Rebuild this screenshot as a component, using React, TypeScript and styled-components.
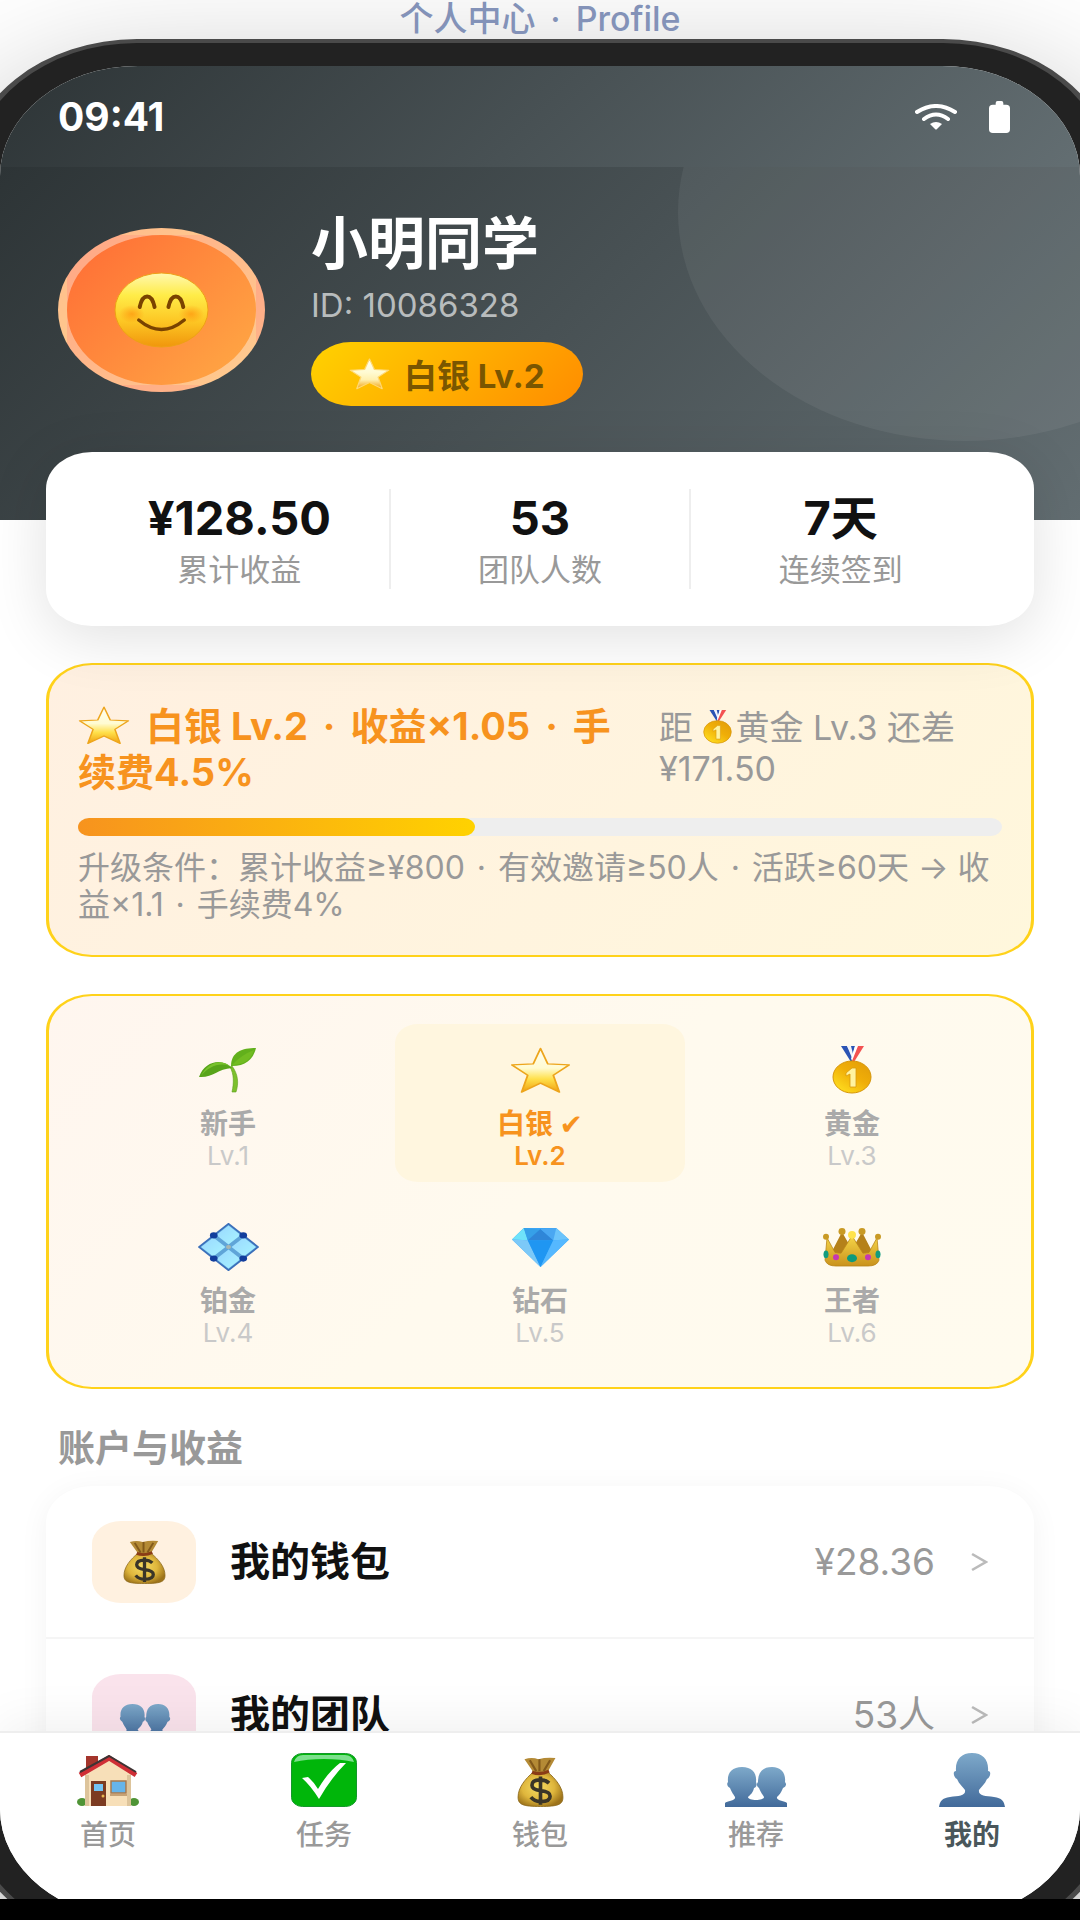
import React from "react";
import styled, { createGlobalStyle } from "styled-components";

const GlobalStyle = createGlobalStyle`
  *, *::before, *::after { box-sizing: border-box; }
  body {
    margin: 0;
    background: #fff;
    font-family: Inter, "Noto Sans CJK SC", "DejaVu Sans", sans-serif;
    color: #111;
  }
  a { color: inherit; text-decoration: none; }
  ul { margin: 0; padding: 0; list-style: none; }
  h1, h2, p { margin: 0; }
  svg { display: block; flex: none; }
`;

const Page = styled.div`
  display: flex;
  flex-direction: column;
  height: 100vh;
  background: #000;
`;

const Stage = styled.main`
  flex: 1;
  min-height: 0;
  display: flex;
  flex-direction: column;
  overflow: hidden;
  background: #fff;
`;

const BottomStrip = styled.footer`
  height: 21px;
  background: #000;
`;

const Caption = styled.p`
  position: relative;
  z-index: 1;
  height: 39px;
  line-height: 38px;
  text-align: center;
  font-size: 34px;
  font-weight: 500;
  color: #8392b8;
`;

const Phone = styled.div`
  flex: 1;
  min-height: 0;
  display: flex;
  margin: 0 -35px -47px;
  padding: 23px 29px;
  border: 4px solid #4a4a4a;
  border-width: 4px 6px;
  border-radius: 172px / 137px;
  background: #222;
  box-shadow: 0 46px 140px rgba(0, 0, 0, 0.3);
`;

const Screen = styled.div`
  flex: 1;
  min-width: 0;
  display: flex;
  flex-direction: column;
  overflow: hidden;
  border-radius: 138px / 110px;
  background: #fff;
`;

const StatusBar = styled.header`
  display: flex;
  align-items: center;
  justify-content: space-between;
  flex: none;
  height: 101px;
  padding: 0 70px 0 58px;
  background: linear-gradient(135deg, #2d3436, #636e72);
  color: #fff;
  font-size: 39px;
  font-weight: 700;
`;

const StatusIcons = styled.div`
  display: flex;
  align-items: center;
  gap: 32px;
`;

const Scroll = styled.div`
  flex: 1;
  min-height: 0;
  overflow: hidden;
`;

const Hero = styled.section`
  position: relative;
  overflow: hidden;
  display: flex;
  align-items: center;
  gap: 46px;
  padding: 46px 58px 114px;
  background: linear-gradient(135deg, #2d3436, #636e72);
  &::after {
    content: "";
    position: absolute;
    top: -184px;
    right: -172px;
    width: 574px;
    height: 458px;
    border-radius: 50%;
    background: rgba(255, 255, 255, 0.06);
  }
`;

const Avatar = styled.div`
  display: flex;
  align-items: center;
  justify-content: center;
  width: 207px;
  height: 164px;
  border: 7px solid rgba(255, 255, 255, 0.4);
  border-width: 7px 9px;
  border-radius: 50%;
  background: linear-gradient(135deg, #ff6b35, #ffab45);
`;

const Identity = styled.div`
  display: flex;
  flex-direction: column;
  align-items: flex-start;
`;

const Name = styled.h1`
  font-size: 57px;
  line-height: 62px;
  font-weight: 700;
  color: #fff;
`;

const UserId = styled.p`
  margin: 10px 0 17px;
  font-size: 33px;
  line-height: 40px;
  color: #b8bcbd;
`;

const Badge = styled.span`
  display: flex;
  align-items: center;
  gap: 14px;
  height: 64px;
  padding: 0 38px;
  border-radius: 40px / 32px;
  background: linear-gradient(135deg, #ffd200, #ff8c00);
  font-size: 33px;
  font-weight: 700;
  color: #7a5600;
`;

const Card = styled.section`
  margin: 0 46px 37px;
  border-radius: 46px / 37px;
`;

const Stats = styled(Card)`
  position: relative;
  z-index: 1;
  display: flex;
  margin-top: -68px;
  padding: 37px 44px;
  background: #fff;
  box-shadow: 0 12px 60px rgba(0, 0, 0, 0.12);
`;

const Stat = styled.div`
  flex: 1;
  height: 100px;
  text-align: center;
  & + & { border-left: 2px solid #eee; }
`;

const StatValue = styled.p`
  font-size: 47px;
  line-height: 57px;
  font-weight: 700;
`;

const StatLabel = styled.p`
  font-size: 31px;
  line-height: 48px;
  color: #999;
`;

const LevelCard = styled(Card)`
  padding: 38px 29px 32px;
  border: 2px solid #ffd21a;
  border-width: 2px 3px;
  background: linear-gradient(135deg, #fff0e1, #fff7dc);
`;

const LevelHead = styled.div`
  display: grid;
  grid-template-columns: 581fr 343fr;
`;

const LevelTitle = styled.h2`
  padding-right: 20px;
  font-size: 38px;
  line-height: 46px;
  font-weight: 700;
  color: #f7931e;
`;

const LevelNext = styled.p`
  font-size: 34px;
  line-height: 41px;
  padding-top: 4px;
  color: #999;
`;

const Inline = styled.span<{ $after?: number }>`
  display: inline-block;
  vertical-align: middle;
  margin: -8px ${(p) => p.$after ?? 0}px 0 0;
`;

const Track = styled.div`
  height: 18px;
  margin: 23px 0 13px;
  border-radius: 11px / 9px;
  background: #eee;
`;

const Fill = styled.div<{ $value: number }>`
  width: ${(p) => p.$value}%;
  height: 100%;
  border-radius: 11px / 9px;
  background: linear-gradient(90deg, #f7931e, #ffd200);
`;

const Terms = styled.p`
  font-size: 32px;
  line-height: 37px;
  color: #999;
`;

const Tiers = styled(Card).attrs({ as: "ul" })`
  display: grid;
  grid-template-columns: repeat(3, 1fr);
  gap: 19px 22px;
  padding: 28px 34px;
  margin-bottom: 34px;
  border: 2px solid #ffd21a;
  border-width: 2px 3px;
  background: linear-gradient(135deg, #fff6ef, #fffaee 50%, #fffbee);
`;

const Tier = styled.li<{ $active?: boolean }>`
  display: flex;
  flex-direction: column;
  align-items: center;
  height: 158px;
  padding-top: 20px;
  border-radius: 23px / 19px;
  background: ${(p) => (p.$active ? "#fff6df" : "transparent")};
  color: ${(p) => (p.$active ? "#f7931e" : "#aaa")};
`;

const TierIcon = styled.div`
  display: flex;
  align-items: center;
  height: 52px;
`;

const TierName = styled.p`
  margin-top: 11px;
  font-size: 28px;
  line-height: 34px;
  font-weight: 700;
`;

const TierLevel = styled.p<{ $active?: boolean }>`
  font-size: 26px;
  line-height: 30px;
  font-weight: ${(p) => (p.$active ? 600 : 400)};
  color: ${(p) => (p.$active ? "#f7931e" : "#c9c9c9")};
`;

const SectionTitle = styled.h2`
  padding: 0 58px;
  font-size: 37px;
  line-height: 52px;
  font-weight: 600;
  color: #999;
`;

const Menu = styled(Card).attrs({ as: "ul" })`
  margin-top: 11px;
  background: #fff;
  box-shadow: 0 5px 30px rgba(0, 0, 0, 0.05);
`;

const MenuItem = styled.li`
  & + & { border-top: 2px solid #f5f5f5; }
`;

const MenuLink = styled.a`
  display: flex;
  align-items: center;
  padding: 35px 46px 34px;
`;

const MenuIcon = styled.span<{ $tint: string }>`
  display: flex;
  align-items: center;
  justify-content: center;
  width: 104px;
  height: 82px;
  margin-right: 34px;
  border-radius: 29px / 23px;
  background: ${(p) => p.$tint};
`;

const MenuLabel = styled.span`
  flex: 1;
  font-size: 40px;
  line-height: 48px;
  font-weight: 600;
`;

const MenuValue = styled.span`
  margin-right: 36px;
  font-size: 37px;
  line-height: 48px;
  color: #999;
`;

const TabBar = styled.nav`
  position: relative;
  z-index: 2;
  flex: none;
  display: flex;
  height: 188px;
  padding-top: 18px;
  border-top: 2px solid #eee;
  background: #fff;
  box-shadow: 0 -9px 46px rgba(0, 0, 0, 0.06);
`;

const Tab = styled.a<{ $active?: boolean }>`
  flex: 1;
  display: flex;
  flex-direction: column;
  align-items: center;
  gap: 8px;
  font-size: 28px;
  line-height: 40px;
  font-weight: ${(p) => (p.$active ? 700 : 500)};
  color: ${(p) => (p.$active ? "#4a575b" : "#999")};
`;

const TabIcon = styled.span`
  display: flex;
  align-items: flex-end;
  height: 56px;
`;

type Art = { w: number; h: number };

const Canvas = ({ w, h, box, children }: Art & { box: string; children: React.ReactNode }) => (
  <svg width={w} height={h} viewBox={box} preserveAspectRatio="none" aria-hidden="true">
    {children}
  </svg>
);

const Smile = ({ w, h }: Art) => (
  <Canvas w={w} h={h} box="0 0 96 76">
    <defs>
      <linearGradient id="face" x1="0" y1="0" x2="0" y2="1">
        <stop offset="0" stopColor="#fff8b0" />
        <stop offset="0.3" stopColor="#ffec48" />
        <stop offset="0.65" stopColor="#fdc724" />
        <stop offset="1" stopColor="#f0960c" />
      </linearGradient>
      <radialGradient id="blush">
        <stop offset="0" stopColor="#ff7a00" stopOpacity="0.5" />
        <stop offset="1" stopColor="#ff7a00" stopOpacity="0" />
      </radialGradient>
    </defs>
    <ellipse cx="48" cy="38" rx="47" ry="37" fill="url(#face)" stroke="#eda015" strokeWidth="1" />
    <ellipse cx="18" cy="42" rx="13" ry="9" fill="url(#blush)" />
    <ellipse cx="78" cy="42" rx="13" ry="9" fill="url(#blush)" />
    <path d="M26 35c3-14 12-14 15 0M55 35c3-14 12-14 15 0" fill="none" stroke="#7a4300" strokeWidth="4" strokeLinecap="round" />
    <path d="M25 48q23 19 46 0" fill="none" stroke="#7a4300" strokeWidth="3.5" strokeLinecap="round" />
  </Canvas>
);

const Star = ({ w, h, pale }: Art & { pale?: boolean }) => {
  const id = pale ? "starPale" : "star";
  return (
    <Canvas w={w} h={h} box="0 0 100 100">
      <defs>
        <linearGradient id={id} x1="0" y1="0" x2="0" y2="1">
          <stop offset="0" stopColor="#fffef0" />
          <stop offset="0.45" stopColor="#fffbd2" />
          <stop offset="0.7" stopColor={pale ? "#fff0b0" : "#ffe04a"} />
          <stop offset="1" stopColor="#f0a010" />
        </linearGradient>
      </defs>
      <path
        d="M50 3 62 36 97 38 71 60 81 96 50 77 19 96 29 60 3 38 38 36Z"
        fill={`url(#${id})`}
        stroke={pale ? "#ffd873" : "#eda51c"}
        strokeWidth="3"
        strokeLinejoin="round"
      />
    </Canvas>
  );
};

const Medal = ({ w, h }: Art) => (
  <Canvas w={w} h={h} box="0 0 40 48">
    <defs>
      <linearGradient id="medal" x1="1" y1="0" x2="0.2" y2="1">
        <stop offset="0" stopColor="#e09b0a" />
        <stop offset="0.5" stopColor="#f0ae08" />
        <stop offset="1" stopColor="#ffdf20" />
      </linearGradient>
    </defs>
    <path d="M9 0H15L22 12 19 16Z" fill="#2b54b4" />
    <path d="M15 0H19L22 8 20 12Z" fill="#f2f4fa" />
    <path d="M19 0H23L21 8Z" fill="#2b54b4" />
    <path d="M23 0H26L21 15 19 13Z" fill="#fff" />
    <path d="M26 0H32L22 16 20 15Z" fill="#f35252" />
    <ellipse cx="20" cy="31" rx="19" ry="16" fill="url(#medal)" stroke="#d6960a" />
    <path d="M14 27 20 22H24V41H18V28L14 30Z" fill="#fff3a0" stroke="#d89a10" strokeWidth="0.8" />
  </Canvas>
);

const Seedling = ({ w, h }: Art) => (
  <Canvas w={w} h={h} box="0 0 58 45">
    <path d="M31 19c4 7 4 16 2 25h4c3-9 2-18-4-26z" fill="#7cc02c" stroke="#5d9e1c" strokeWidth="0.6" />
    <path d="M32 18C32 4 43 0 57 0 54 12 46 18 33 18Z" fill="#62b01c" />
    <path d="M33 17Q42 7 55 2 52 12 44 15 38 17 33 17Z" fill="#72bc22" />
    <path d="M33 20C24 10 6 12 0 29c14 1 18-8 33-9Z" fill="#58a41a" />
    <path d="M31 18C20 14 9 19 2 28 8 16 20 10 31 18Z" fill="#78c22c" />
  </Canvas>
);

const DotDiamond = ({ w, h }: Art) => (
  <Canvas w={w} h={h} box="0 0 60 60">
    <defs>
      <linearGradient id="tile" x1="0" y1="0" x2="1" y2="1">
        <stop offset="0" stopColor="#9ad8ff" />
        <stop offset="1" stopColor="#a8f4ff" />
      </linearGradient>
    </defs>
    <path d="M30 1 59 30 30 59 1 30Z" fill="#5fa5d8" stroke="#3b6fba" strokeWidth="2" strokeLinejoin="round" />
    <g fill="url(#tile)">
      <path d="M30 3 42 15 30 27 18 15Z" />
      <path d="M45 18 57 30 45 42 33 30Z" />
      <path d="M30 33 42 45 30 57 18 45Z" />
      <path d="M15 18 27 30 15 42 3 30Z" />
    </g>
    <g fill="#123d9c">
      <circle cx="15.5" cy="15.5" r="3.8" />
      <circle cx="44.5" cy="15.5" r="3.8" />
      <circle cx="15.5" cy="44.5" r="3.8" />
      <circle cx="44.5" cy="44.5" r="3.8" />
    </g>
    <circle cx="30" cy="30" r="2.5" fill="#a9b7b0" />
  </Canvas>
);

const Gem = ({ w, h }: Art) => (
  <Canvas w={w} h={h} box="0 0 58 42">
    <path d="M12 1H45L58 13 29 42 0 13Z" fill="#3aa5f5" />
    <path d="M12 1 0 13 16 14Z" fill="#6fe3fa" />
    <path d="M12 1 29 3 16 14Z" fill="#36a0e8" />
    <path d="M29 2 16 14H42Z" fill="#2f86d8" />
    <path d="M29 2 45 1 42 14Z" fill="#4aa7f2" />
    <path d="M45 1 58 13 42 14Z" fill="#6cc4fb" />
    <path d="M0 13 16 14 29 42Z" fill="#7cc9f8" />
    <path d="M16 14H42L29 42Z" fill="#1f96f2" />
    <path d="M42 14 58 13 29 42Z" fill="#55b8ff" />
  </Canvas>
);

const Crown = ({ w, h }: Art) => (
  <Canvas w={w} h={h} box="0 0 58 40">
    <defs>
      <linearGradient id="crown" x1="0" y1="0" x2="0" y2="1">
        <stop offset="0" stopColor="#f6d648" />
        <stop offset="1" stopColor="#c9921c" />
      </linearGradient>
    </defs>
    <path d="M8 26 19 4 29 22 39 4 50 26Z" fill="#b5811a" />
    <path d="M4 10 12 25 18 26 29 8 40 26 46 25 54 10 56 33Q54 39 45 39H13Q4 39 2 33Z" fill="url(#crown)" stroke="#b98518" strokeWidth="0.8" />
    <g fill="#c99a24">
      <circle cx="3" cy="9" r="3" />
      <circle cx="55" cy="9" r="3" />
      <circle cx="19" cy="3.5" r="3.5" />
      <circle cx="39" cy="3.5" r="3.5" />
    </g>
    <circle cx="29" cy="7" r="4" fill="#ffe34d" />
    <ellipse cx="29" cy="31" rx="5" ry="4" fill="#0d9a7c" />
    <ellipse cx="3" cy="27" rx="2.5" ry="4" fill="#129c7f" />
    <ellipse cx="55" cy="27" rx="2.5" ry="4" fill="#129c7f" />
    <circle cx="13" cy="30" r="3" fill="#c637b4" />
    <circle cx="45" cy="30" r="3" fill="#c637b4" />
  </Canvas>
);

const MoneyBag = ({ w, h }: Art) => (
  <Canvas w={w} h={h} box="0 0 44 46">
    <defs>
      <radialGradient id="bag" cx="0.45" cy="0.45" r="0.6">
        <stop offset="0" stopColor="#f6dc62" />
        <stop offset="0.6" stopColor="#dfb63c" />
        <stop offset="1" stopColor="#9d731a" />
      </radialGradient>
    </defs>
    <path d="M7 2Q14 0 20 2 28 0 36 1L28 15H16Z" fill="#b48a35" />
    <path d="M12 3 18 13M21 2 21 13M31 3 25 13" stroke="#82591a" strokeWidth="2" />
    <path d="M15 14H29C36 20 43 28 43 37 43 44 38 45.5 22 45.5S1 44 1 37C1 28 8 20 15 14Z" fill="url(#bag)" stroke="#8d6a1c" strokeWidth="0.8" />
    <path d="M14 14Q22 17 30 13" stroke="#8a3c16" strokeWidth="3" fill="none" />
    <path d="M30 24Q27 21 22 21 14 21 14 26 14 30 22 31 31 32 31 36 31 41 22 41 16 41 13 37M22 18V44" fill="none" stroke="#3a3528" strokeWidth="3.4" />
  </Canvas>
);

const House = ({ w, h }: Art) => (
  <Canvas w={w} h={h} box="0 0 62 52">
    <ellipse cx="5" cy="47" rx="5" ry="4" fill="#4f9436" />
    <ellipse cx="57" cy="47" rx="5" ry="4" fill="#4f9436" />
    <path d="M9 1H21V16H9Z" fill="#a4352c" />
    <path d="M8 18 32 4 54 18V51H8Z" fill="#f7dfb8" />
    <path d="M8 20H12V51H8ZM50 20H54V51H50Z" fill="#ddc49b" />
    <path d="M3 20 32 3 59 20" fill="none" stroke="#cf2f36" strokeWidth="5" />
    <path d="M3 17 32 1 59 17" fill="none" stroke="#3d3434" strokeWidth="2" />
    <path d="M14 26H29V51H14Z" fill="#7c3b22" />
    <path d="M17 29H26V36H17Z" fill="#74c4f4" />
    <circle cx="26" cy="41" r="1.5" fill="#e9b750" />
    <path d="M34 26H49V38H34Z" fill="#66b4ea" stroke="#a8794e" strokeWidth="1.5" />
    <path d="M33 39H50V41H33Z" fill="#c7a275" />
  </Canvas>
);

const CheckBox = ({ w, h }: Art) => (
  <Canvas w={w} h={h} box="0 0 66 54">
    <rect x="0.5" y="0.5" width="65" height="53" rx="11" ry="9" fill="#00b60a" stroke="#14982a" />
    <path d="M12 2H54Q61 2 63 9 50 6 33 6T3 9Q5 2 12 2Z" fill="#7ce08c" />
    <path d="M11 25 17 24Q22 28 27 36 37 19 49 10H55Q40 25 28 46Q20 33 11 25Z" fill="#fff" />
  </Canvas>
);

const BustGradient = ({ id }: { id: string }) => (
  <defs>
    <linearGradient id={id} x1="0" y1="0" x2="0" y2="1">
      <stop offset="0" stopColor="#7ea9ca" />
      <stop offset="1" stopColor="#426a9a" />
    </linearGradient>
  </defs>
);

const Bust = ({ w, h }: Art) => (
  <Canvas w={w} h={h} box="0 0 66 54">
    <BustGradient id="bust" />
    <path
      d="M33 0C22 0 16 7 17 18 13 18 15 25 18 26 20 31 24 34 26 37 27 43 20 43 11 44 3 45 1 48 0 54H66C65 48 63 45 55 44 46 43 39 43 40 37 42 34 46 31 48 26 51 25 53 18 49 18 50 7 44 0 33 0Z"
      fill="url(#bust)"
    />
  </Canvas>
);

const Busts = ({ w, h, id }: Art & { id: string }) => (
  <Canvas w={w} h={h} box="0 -14 62 54">
    <BustGradient id={id} />
    <path
      d="M17 0C7 0 2 6 3 15 1 17 3 20 5 21 7 26 9 28 10 30 11 34 2 34 0 36V40H62V36C60 34 51 34 52 30 54 28 56 26 58 21 61 20 62 17 60 15 61 6 56 0 47 0 37 0 33 6 33 15 31 17 32 20 34 21 36 26 38 28 39 30 39 34 23 34 23 30 25 28 28 26 29 21 32 20 32 17 31 15 32 6 27 0 17 0Z"
      fill={`url(#${id})`}
    />
  </Canvas>
);

const Wifi = () => (
  <Canvas w={42} h={26} box="0 0 42 26">
    <path d="M2 8Q21-4 40 8M9 15Q21 6 33 15" fill="none" stroke="#fff" strokeWidth="4" strokeLinecap="round" />
    <path d="M15 20Q21 16 27 20L22 25Q21 26 20 25Z" fill="#fff" />
  </Canvas>
);

const Battery = () => (
  <Canvas w={21} h={32} box="0 0 22 34">
    <path d="M7 4V2Q7 0 9 0H13Q15 0 15 2V4H18Q22 4 22 8V30Q22 34 18 34H4Q0 34 0 30V8Q0 4 4 4Z" fill="#fff" />
  </Canvas>
);

const Chevron = () => (
  <Canvas w={17} h={20} box="0 0 16 20">
    <path d="M1 2 14 10 1 18" fill="none" stroke="#bbb" strokeWidth="2.5" />
  </Canvas>
);

const wideDot = " \u2009·\u2009 ";
const dot = " \u200A·\u200A ";

const levelTitle = ["白银 Lv.2", "收益×1.05", "手续费4.5%"].join(wideDot);
const levelTerms = ["升级条件：累计收益≥¥800", "有效邀请≥50人", "活跃≥60天 → 收益×1.1", "手续费4%"].join(dot);

const stats = [
  { value: "¥128.50", label: "累计收益" },
  { value: "53", label: "团队人数" },
  { value: "7天", label: "连续签到" },
];

const tiers = [
  { name: "新手", level: "Lv.1", icon: <Seedling w={58} h={45} /> },
  { name: "白银 ✔", level: "Lv.2", icon: <Star w={61} h={47} />, active: true },
  { name: "黄金", level: "Lv.3", icon: <Medal w={40} h={48} /> },
  { name: "铂金", level: "Lv.4", icon: <DotDiamond w={61} h={48} /> },
  { name: "钻石", level: "Lv.5", icon: <Gem w={57} h={40} /> },
  { name: "王者", level: "Lv.6", icon: <Crown w={58} h={39} /> },
];

const menu = [
  { label: "我的钱包", value: "¥28.36", tint: "#fff1e0", icon: <MoneyBag w={43} h={44} /> },
  { label: "我的团队", value: "53人", tint: "#fae3ec", icon: <Busts w={53} h={46} id="bustsMenu" /> },
];

const tabs = [
  { label: "首页", icon: <House w={62} h={52} /> },
  { label: "任务", icon: <CheckBox w={66} h={54} /> },
  { label: "钱包", icon: <MoneyBag w={47} h={50} /> },
  { label: "推荐", icon: <Busts w={62} h={54} id="bustsTab" /> },
  { label: "我的", icon: <Bust w={66} h={54} />, active: true },
];

export default function App() {
  return (
    <Page>
      <GlobalStyle />
      <Stage>
        <Caption>{`个人中心${wideDot}Profile`}</Caption>
        <Phone>
          <Screen>
            <StatusBar>
              <span>09:41</span>
              <StatusIcons>
                <Wifi />
                <Battery />
              </StatusIcons>
            </StatusBar>
            <Scroll>
              <Hero>
                <Avatar>
                  <Smile w={95} h={76} />
                </Avatar>
                <Identity>
                  <Name>小明同学</Name>
                  <UserId>ID: 10086328</UserId>
                  <Badge>
                    <Star w={41} h={32} pale />
                    白银 Lv.2
                  </Badge>
                </Identity>
              </Hero>
              <Stats>
                {stats.map((s) => (
                  <Stat key={s.label}>
                    <StatValue>{s.value}</StatValue>
                    <StatLabel>{s.label}</StatLabel>
                  </Stat>
                ))}
              </Stats>
              <LevelCard>
                <LevelHead>
                  <LevelTitle>
                    <Inline $after={16}>
                      <Star w={52} h={39} />
                    </Inline>
                    {levelTitle}
                  </LevelTitle>
                  <LevelNext>
                    距{" "}
                    <Inline $after={4}>
                      <Medal w={29} h={34} />
                    </Inline>
                    黄金 Lv.3 还差 ¥171.50
                  </LevelNext>
                </LevelHead>
                <Track role="progressbar" aria-label="升级进度" aria-valuenow={43} aria-valuemin={0} aria-valuemax={100}>
                  <Fill $value={43} />
                </Track>
                <Terms>{levelTerms}</Terms>
              </LevelCard>
              <Tiers>
                {tiers.map((t) => (
                  <Tier key={t.level} $active={t.active}>
                    <TierIcon>{t.icon}</TierIcon>
                    <TierName>{t.name}</TierName>
                    <TierLevel $active={t.active}>{t.level}</TierLevel>
                  </Tier>
                ))}
              </Tiers>
              <SectionTitle>账户与收益</SectionTitle>
              <Menu>
                {menu.map((m) => (
                  <MenuItem key={m.label}>
                    <MenuLink href="#">
                      <MenuIcon $tint={m.tint}>{m.icon}</MenuIcon>
                      <MenuLabel>{m.label}</MenuLabel>
                      <MenuValue>{m.value}</MenuValue>
                      <Chevron />
                    </MenuLink>
                  </MenuItem>
                ))}
              </Menu>
            </Scroll>
            <TabBar>
              {tabs.map((t) => (
                <Tab key={t.label} href="#" $active={t.active}>
                  <TabIcon>{t.icon}</TabIcon>
                  {t.label}
                </Tab>
              ))}
            </TabBar>
          </Screen>
        </Phone>
      </Stage>
      <BottomStrip />
    </Page>
  );
}
